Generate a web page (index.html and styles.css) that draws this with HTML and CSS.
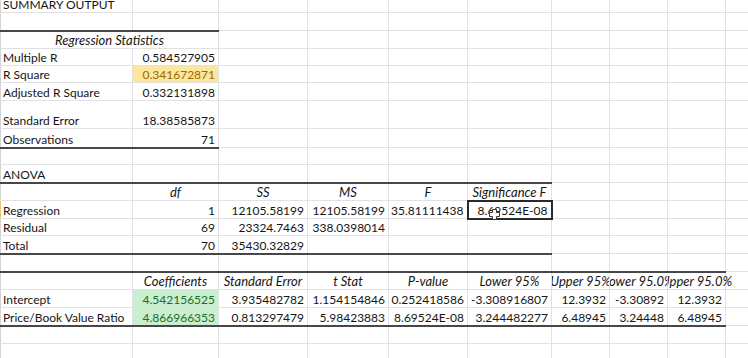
FILE: index.html
```html
<!DOCTYPE html>
<html>
<head>
<meta charset="utf-8">
<link rel="stylesheet" href="styles.css">
</head>
<body>
<table class="sheet">
<colgroup>
<col class="ca"><col class="cb"><col class="cc"><col class="cd"><col class="ce"><col class="cf"><col class="cg"><col class="ch"><col class="ci"><col class="cj">
</colgroup>
<tr class="h18"><td class="a">SUMMARY OUTPUT</td><td></td><td></td><td></td><td></td><td></td><td></td><td></td><td></td><td></td></tr>
<tr class="h18"><td class="a"></td><td></td><td></td><td></td><td></td><td></td><td></td><td></td><td></td><td></td></tr>
<tr class="h18"><td class="a t hd" colspan="2"><div class="ctr"><span>Regression Statistics</span></div></td><td></td><td></td><td></td><td></td><td></td><td></td><td></td><td></td></tr>
<tr class="h17"><td class="a">Multiple R</td><td class="r">0.584527905</td><td></td><td></td><td></td><td></td><td></td><td></td><td></td><td></td></tr>
<tr class="h17"><td class="a">R Square</td><td class="r y">0.341672871</td><td></td><td></td><td></td><td></td><td></td><td></td><td></td><td></td></tr>
<tr class="h18"><td class="a">Adjusted R Square</td><td class="r">0.332131898</td><td></td><td></td><td></td><td></td><td></td><td></td><td></td><td></td></tr>
<tr class="h28"><td class="a">Standard Error</td><td class="r">18.38585873</td><td></td><td></td><td></td><td></td><td></td><td></td><td></td><td></td></tr>
<tr class="h19"><td class="a b">Observations</td><td class="r b">71</td><td></td><td></td><td></td><td></td><td></td><td></td><td></td><td></td></tr>
<tr class="h17"><td class="a"></td><td></td><td></td><td></td><td></td><td></td><td></td><td></td><td></td><td></td></tr>
<tr class="h18"><td class="a">ANOVA</td><td></td><td></td><td></td><td></td><td></td><td></td><td></td><td></td><td></td></tr>
<tr class="h18"><td class="a t"></td><td class="t hd"><div class="ctr"><span>df</span></div></td><td class="t hd"><div class="ctr"><span>SS</span></div></td><td class="t hd"><div class="ctr"><span>MS</span></div></td><td class="t hd"><div class="ctr"><span>F</span></div></td><td class="t hd"><div class="ctr"><span>Significance F</span></div></td><td></td><td></td><td></td><td></td></tr>
<tr class="h18"><td class="a rowsel">Regression</td><td class="r">1</td><td class="r">12105.58199</td><td class="r">12105.58199</td><td class="r">35.81111438</td><td class="r sel">8.69524E-08<svg class="cursor" width="11" height="11" viewBox="0 0 11 11"><path d="M3.5 0.5h4v3h3v4h-3v3h-4v-3h-3v-4h3z" fill="#fff" stroke="#333" stroke-width="1"/></svg></td><td></td><td></td><td></td><td></td></tr>
<tr class="h17"><td class="a">Residual</td><td class="r">69</td><td class="r">23324.7463</td><td class="r">338.0398014</td><td></td><td></td><td></td><td></td><td></td><td></td></tr>
<tr class="h18"><td class="a b">Total</td><td class="r b">70</td><td class="r b">35430.32829</td><td class="b"></td><td class="b"></td><td class="b"></td><td></td><td></td><td></td><td></td></tr>
<tr class="h18"><td class="a"></td><td></td><td></td><td></td><td></td><td></td><td></td><td></td><td></td><td></td></tr>
<tr class="h18"><td class="a t"></td><td class="t hd"><div class="ctr"><span>Coefficients</span></div></td><td class="t hd"><div class="ctr"><span>Standard Error</span></div></td><td class="t hd"><div class="ctr"><span>t Stat</span></div></td><td class="t hd"><div class="ctr"><span>P-value</span></div></td><td class="t hd"><div class="ctr"><span>Lower 95%</span></div></td><td class="t hd"><div class="ctr"><span>Upper 95%</span></div></td><td class="t hd"><div class="ctr"><span>Lower 95.0%</span></div></td><td class="t hd spill"><div class="ctr"><span>Upper 95.0%</span></div></td><td></td></tr>
<tr class="h18"><td class="a">Intercept</td><td class="r g">4.542156525</td><td class="r">3.935482782</td><td class="r">1.154154846</td><td class="r">0.252418586</td><td class="r">-3.308916807</td><td class="r">12.3932</td><td class="r">-3.30892</td><td class="r">12.3932</td><td></td></tr>
<tr class="h18"><td class="a b">Price/Book Value Ratio</td><td class="r g b">4.866966353</td><td class="r b">0.813297479</td><td class="r b">5.98423883</td><td class="r b">8.69524E-08</td><td class="r b">3.244482277</td><td class="r b">6.48945</td><td class="r b">3.24448</td><td class="r b">6.48945</td><td></td></tr>
<tr class="h18"><td class="a"></td><td></td><td></td><td></td><td></td><td></td><td></td><td></td><td></td><td></td></tr>
<tr class="h18"><td class="a"></td><td></td><td></td><td></td><td></td><td></td><td></td><td></td><td></td><td></td></tr>
</table>
</body>
</html>
```

FILE: styles.css
```css
html, body {
  margin: 0;
  padding: 0;
  background: #ffffff;
  overflow: hidden;
}
body {
  width: 748px;
  height: 358px;
  font-family: "Lato", "Liberation Sans", sans-serif;
  font-size: 12px;
  color: #161616;
}
.sheet {
  margin-top: -6px;
  border-collapse: collapse;
  table-layout: fixed;
  width: 748px;
}
.ca { width: 132px; }
.cb { width: 86px; }
.cc { width: 89px; }
.cd { width: 81px; }
.ce { width: 79px; }
.cf { width: 84px; }
.cg { width: 58px; }
.ch { width: 58px; }
.ci { width: 58px; }
.cj { width: 23px; }
.h17 { height: 17px; }
.h18 { height: 18px; }
.h19 { height: 19px; }
.h28 { height: 28px; }
td {
  border: 1px solid #e1e1e4;
  padding: 0 3px 0 2px;
  vertical-align: bottom;
  line-height: 15px;
  white-space: nowrap;
  overflow: hidden;
}
td.a {
  border-left: 1px solid #d4d4d4;
}
td.a.rowsel {
  border-left-color: #e9c86a;
}
td.r { text-align: right; }
td.t { border-top: 2px solid #474747; }
td.b { border-bottom: 2px solid #474747; }
td.hd {
  font-style: italic;
  font-size: 13px;
  padding: 0;
}
.ctr {
  display: flex;
  justify-content: center;
  overflow: hidden;
}
.ctr span { flex: none; }
td.spill {
  overflow: visible;
  clip-path: inset(0 -40px 0 0);
}
td.spill .ctr { overflow: visible; }
td.y {
  background: #fde79c;
  color: #9c6a00;
}
td.g {
  background: #c9eed0;
  color: #1d6d25;
}
td.sel {
  border: 2px solid #2a2a2a;
  position: relative;
  overflow: visible;
}
.cursor {
  position: absolute;
  left: 20px;
  top: 7px;
}
```
